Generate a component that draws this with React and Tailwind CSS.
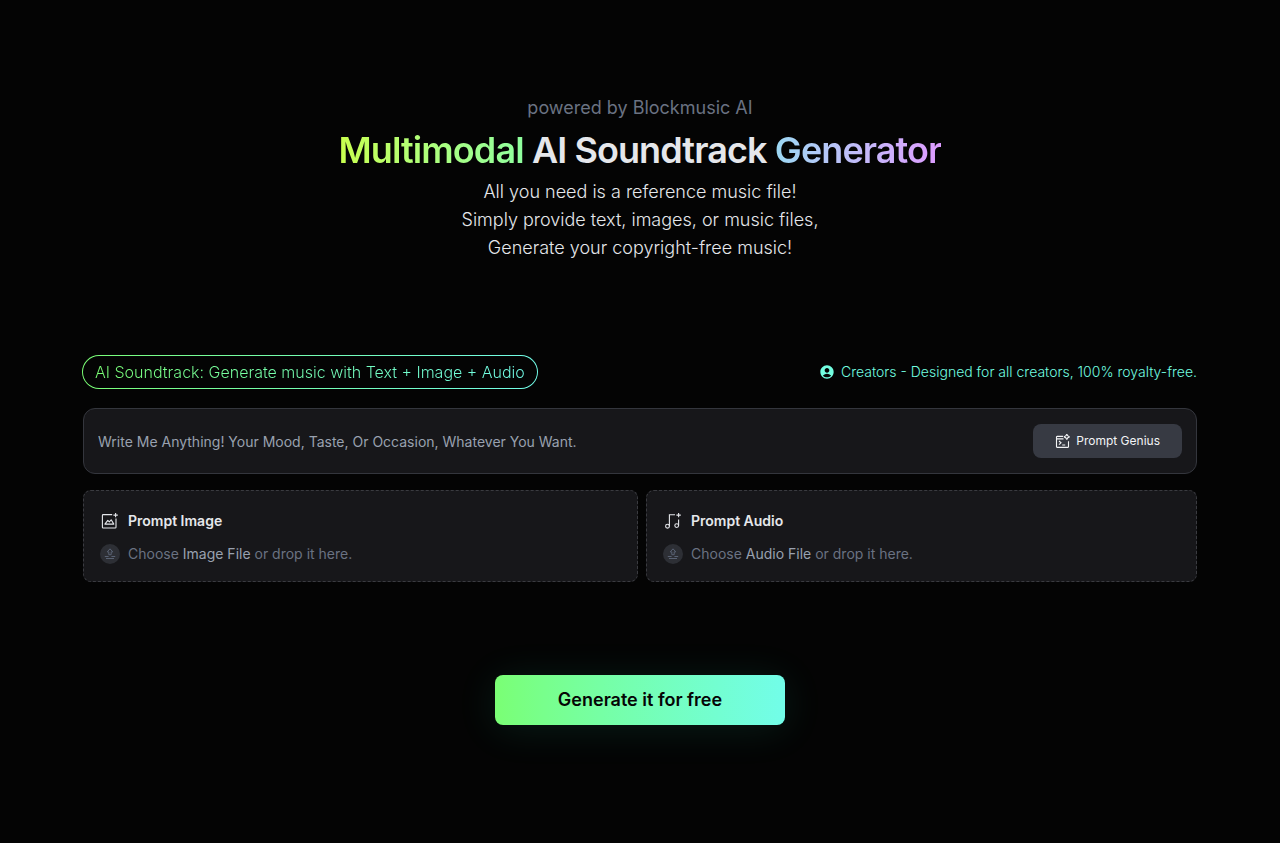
import React, { useState } from 'react';
import { MdAccountCircle } from 'react-icons/md';

const ImageIcon = () => (
  <svg className="h-5 w-5 shrink-0" viewBox="0 0 20 20" fill="none" stroke="currentColor" strokeWidth="1.1" aria-hidden="true">
    <path d="M12.2 3.6H3.2a.8.8 0 0 0-.8.8v11.8a.8.8 0 0 0 .8.8h12a.8.8 0 0 0 .8-.8V7.6" />
    <path d="M4.9 13.1h8.9l-2.6-4.3-1.9 2-1.5-1.5z" strokeLinejoin="round" />
    <path d="M15.6 1.9v4.4M13.4 4.1h4.4" />
  </svg>
);

const AudioIcon = () => (
  <svg className="h-5 w-5 shrink-0" viewBox="0 0 20 20" fill="none" stroke="currentColor" strokeWidth="1.1" aria-hidden="true">
    <circle cx="4.5" cy="15.2" r="1.9" />
    <circle cx="13.7" cy="14.6" r="1.9" />
    <path d="M6.4 15.2V3.8h5.6M15.6 14.6V8.6" />
    <path d="M15.6 1.9v4.4M13.4 4.1h4.4" />
  </svg>
);

const UploadIcon = () => (
  <span className="flex h-5 w-5 shrink-0 items-center justify-center rounded-full bg-[#2d2f35] text-[#596273]">
    <svg className="h-3 w-3" viewBox="0 0 12 12" fill="none" stroke="currentColor" aria-hidden="true">
      <path d="M6 .8 3.2 3.9h1.6v2.8h2.4V3.9h1.6z" strokeLinejoin="round" />
      <path d="M.8 8.5h3.8M7.4 8.5h3.8M2 10.5h8" />
    </svg>
  </span>
);

const GeniusIcon = () => (
  <svg className="h-4 w-4 shrink-0" viewBox="0 0 16 16" fill="none" stroke="currentColor" strokeWidth="1.1" aria-hidden="true">
    <path d="M8.2 3.4H2.1a.6.6 0 0 0-.6.6v9.8a.6.6 0 0 0 .6.6h10.8a.6.6 0 0 0 .6-.6V8.2M1.5 5.9h7" />
    <path d="m4 8 2 1.8-2 1.8M7.2 12h3" />
    <path d="M11.8 1.1c.4 1.6 1.2 2.4 2.8 2.8-1.6.4-2.4 1.2-2.8 2.8-.4-1.6-1.2-2.4-2.8-2.8 1.6-.4 2.4-1.2 2.8-2.8z" />
  </svg>
);

const DropCard = ({ icon, title, fileLabel, accept }) => {
  const [fileName, setFileName] = useState('');

  return (
    <label className="flex cursor-pointer flex-col gap-[13px] rounded-lg border border-dashed border-[#3a3b40] bg-[#17171a] px-4 pt-5 pb-[17px]">
      <span className="flex items-center gap-2 text-sm font-semibold text-gray-200">
        {icon}
        {title}
      </span>
      <span className="flex items-center gap-2 text-sm text-gray-500">
        <UploadIcon />
        {fileName ? (
          <span className="text-gray-400">{fileName}</span>
        ) : (
          <span>
            Choose <span className="text-gray-400">{fileLabel}</span> or drop it here.
          </span>
        )}
      </span>
      <input
        type="file"
        accept={accept}
        className="sr-only"
        onChange={(e) => setFileName(e.target.files[0]?.name || '')}
      />
    </label>
  );
};

const App = () => {
  const [prompt, setPrompt] = useState('');

  return (
    <main className="min-h-screen bg-[#040404] px-6 pt-24 pb-16 font-['Inter',sans-serif]">
      <div className="mx-auto max-w-[1114px]">
        <header className="text-center">
          <p className="text-lg leading-6 text-gray-500">powered by Blockmusic AI</p>
          <h1 className="mt-2 text-4xl leading-11 font-semibold tracking-tight text-gray-200">
            <span className="bg-linear-to-r from-[#c8ff4d] to-[#8fff9f] bg-clip-text text-transparent">Multimodal</span>
            {' AI Soundtrack '}
            <span className="bg-linear-to-r from-[#9bd8f3] to-[#dd9bff] bg-clip-text text-transparent">Generator</span>
          </h1>
          <p className="mt-1.5 text-lg leading-7 font-light text-gray-200">
            All you need is a reference music file!
            <br />
            Simply provide text, images, or music files,
            <br />
            Generate your copyright-free music!
          </p>
        </header>

        <section className="mt-[93px]">
          <div className="flex flex-wrap items-center justify-between gap-4">
            <div className="-ml-px rounded-full bg-linear-to-r from-[#7aff74] to-[#72fde9] p-px">
              <h2 className="rounded-full bg-[#040404] px-3 leading-8 font-light">
                <span className="bg-linear-to-r from-[#7aff74] to-[#72fde9] bg-clip-text text-transparent">
                  AI Soundtrack: Generate music with Text + Image + Audio
                </span>
              </h2>
            </div>
            <p className="flex items-center gap-1.5 text-sm font-light text-[#72fde0]">
              <MdAccountCircle className="h-4 w-4" />
              Creators - Designed for all creators, 100% royalty-free.
            </p>
          </div>

          <div className="mt-[19px] flex items-center gap-4 rounded-xl border border-[#34363d] bg-[#17171a] px-3.5 py-[15px]">
            <input
              type="text"
              aria-label="Prompt"
              value={prompt}
              onChange={(e) => setPrompt(e.target.value)}
              placeholder="Write Me Anything! Your Mood, Taste, Or Occasion, Whatever You Want."
              className="h-8 min-w-0 flex-1 bg-transparent text-sm text-gray-200 outline-none placeholder:text-gray-400"
            />
            <button
              type="button"
              className="flex items-center gap-[5px] rounded-lg bg-[#373a43] px-[22px] py-2 text-xs leading-[18px] text-gray-100"
            >
              <GeniusIcon />
              Prompt Genius
            </button>
          </div>

          <div className="mt-4 grid grid-cols-[555fr_551fr] gap-2">
            <DropCard icon={<ImageIcon />} title="Prompt Image" fileLabel="Image File" accept="image/*" />
            <DropCard icon={<AudioIcon />} title="Prompt Audio" fileLabel="Audio File" accept="audio/*" />
          </div>
        </section>

        <div className="mt-[93px] flex justify-center">
          <button
            type="button"
            className="w-[290px] rounded-lg bg-linear-to-r from-[#7aff74] to-[#72fde9] py-3 text-lg leading-6.5 font-semibold text-[#050505] shadow-[0_4px_40px_rgba(60,255,210,0.1)]"
          >
            Generate it for free
          </button>
        </div>
      </div>
    </main>
  );
};

export default App;
